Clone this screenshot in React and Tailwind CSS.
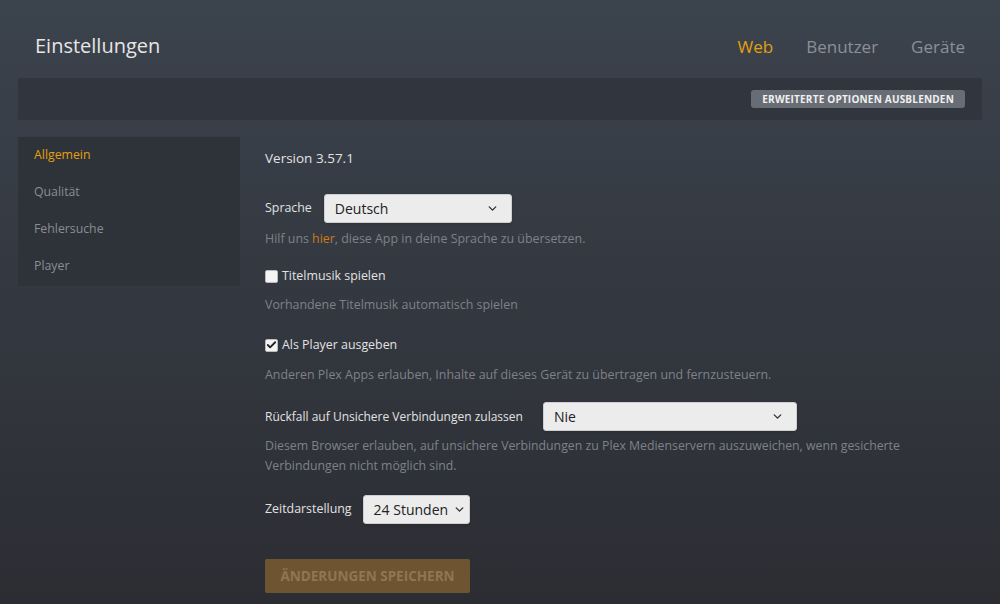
import { ChevronDown, Check } from 'lucide-react';

const NAV = ['Allgemein', 'Qualität', 'Fehlersuche', 'Player'];

function Select({ value, className }) {
  return (
    <div className={`flex items-center justify-between gap-[5px] whitespace-nowrap bg-[#ececec] rounded-[3px] border border-[#cfcfcf] shadow-sm text-[#222] ${className}`}>
      <span>{value}</span>
      <ChevronDown size={13} strokeWidth={2.5} className="text-[#333] shrink-0" />
    </div>
  );
}

function Checkbox({ checked }) {
  return (
    <span className="w-[13px] h-[13px] rounded-[2px] bg-[#f4f4f4] border border-[#bbb] flex items-center justify-center">
      {checked && <Check size={12} strokeWidth={4} className="text-[#222]" />}
    </span>
  );
}

export default function App() {
  return (
    <div className="w-[1000px] h-[604px] overflow-hidden bg-gradient-to-b from-[#3b434d] to-[#2c2d33] font-['Open_Sans','Noto_Sans',sans-serif]">
      {/* header */}
      <div className="flex items-end justify-between h-[62px] pl-[35px] pr-[35px] pb-[6px]">
        <h1 className="text-[20px] text-[#e6e6e6] leading-none">Einstellungen</h1>
        <div className="flex gap-[33px] text-[17px] leading-none mb-[1px]">
          <span className="text-[#e5a00d]">Web</span>
          <span className="text-[#8b9097]">Benutzer</span>
          <span className="text-[#8b9097]">Geräte</span>
        </div>
      </div>

      {/* options bar */}
      <div className="mx-[18px] mt-[16px] h-[42px] bg-[#31363e] flex items-center justify-end pr-[17px]">
        <button className="h-[18px] px-[11px] rounded-[3px] bg-[#686d75] text-[10px] font-bold tracking-[0.2px] text-[#f0f0f0] leading-none">
          ERWEITERTE OPTIONEN AUSBLENDEN
        </button>
      </div>

      <div className="flex mt-[17px]">
        {/* sidebar */}
        <div className="ml-[18px] w-[222px] h-[149px] bg-[#2e3239] flex flex-col">
          {NAV.map((n, i) => (
            <div key={n} className={`h-[37px] flex items-center pl-[16px] text-[12.3px] ${i === 0 ? 'text-[#e5a00d]' : 'text-[#8a8e94]'}`}>
              {n}
            </div>
          ))}
        </div>

        {/* content */}
        <div className="ml-[25px] flex flex-col text-[12.4px] text-[#e2e2e2]">
          <div className="text-[13.5px] mt-[11px] leading-[20px]">Version 3.57.1</div>

          <div className="flex items-center mt-[26px] gap-[12px]">
            <span>Sprache</span>
            <Select value="Deutsch" className="w-[188px] h-[29px] pl-[10px] pr-[12px] text-[14px]" />
          </div>
          <div className="mt-[4px] text-[12.4px] leading-[24px] text-[#7e8288]">
            Hilf uns <span className="text-[#cc7b19]">hier</span>, diese App in deine Sprache zu übersetzen.
          </div>

          <div className="flex items-center gap-[4px] mt-[15px] leading-[20px]">
            <Checkbox />
            <span>Titelmusik spielen</span>
          </div>
          <div className="mt-[9px] text-[12.4px] leading-[20px] text-[#7e8288]">Vorhandene Titelmusik automatisch spielen</div>

          <div className="flex items-center gap-[4px] mt-[20px] leading-[20px]">
            <Checkbox checked />
            <span>Als Player ausgeben</span>
          </div>
          <div className="mt-[10px] text-[12.4px] leading-[20px] text-[#7e8288]">
            Anderen Plex Apps erlauben, Inhalte auf dieses Gerät zu übertragen und fernzusteuern.
          </div>

          <div className="flex items-center mt-[17px]">
            <span className="text-[12px] w-[278px]">Rückfall auf Unsichere Verbindungen zulassen</span>
            <Select value="Nie" className="w-[254px] h-[29px] pl-[10px] pr-[12px] text-[14px]" />
          </div>
          <div className="mt-[5px] w-[660px] text-[12.3px] leading-[20px] text-[#7e8288]">
            Diesem Browser erlauben, auf unsichere Verbindungen zu Plex Medienservern auszuweichen, wenn gesicherte Verbindungen nicht möglich sind.
          </div>

          <div className="flex items-center mt-[19px] gap-[11px]">
            <span>Zeitdarstellung</span>
            <Select value="24 Stunden" className="w-[107px] h-[29px] pl-[10px] pr-[10px] text-[14px]" />
          </div>

          <button className="mt-[35px] w-[205px] h-[34px] rounded-[2px] bg-[#6f5431] text-[13.5px] font-bold text-[#8e7656] text-center">
            ÄNDERUNGEN SPEICHERN
          </button>
        </div>
      </div>
    </div>
  );
}
